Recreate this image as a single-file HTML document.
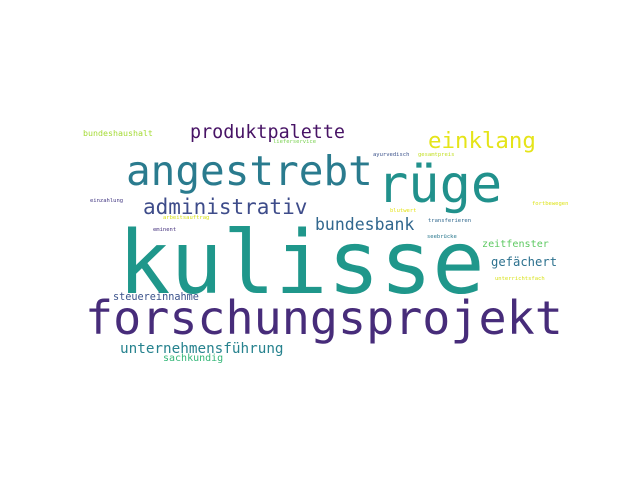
<!DOCTYPE html>
<html><head><meta charset="utf-8"><style>
html,body{margin:0;padding:0;background:#fff;width:640px;height:480px;overflow:hidden}
.w{position:absolute;font-family:"DejaVu Sans Mono","Liberation Mono",monospace;line-height:1;white-space:nowrap}
</style></head><body>
<div class="w" style="left:118px;top:220px;font-size:87px;color:#1f978b">kulisse</div>
<div class="w" style="left:85px;top:296px;font-size:46.7px;color:#472c7a">forschungsprojekt</div>
<div class="w" style="left:126px;top:151px;font-size:41px;color:#2a7b8e">angestrebt</div>
<div class="w" style="left:377px;top:159px;font-size:52px;color:#21918c">rüge</div>
<div class="w" style="left:143px;top:197px;font-size:21px;color:#3e4c8a">administrativ</div>
<div class="w" style="left:190px;top:124px;font-size:18.4px;color:#471365">produktpalette</div>
<div class="w" style="left:428px;top:130px;font-size:22.4px;color:#e5e419">einklang</div>
<div class="w" style="left:315px;top:217px;font-size:16.5px;color:#31678e">bundesbank</div>
<div class="w" style="left:482px;top:240px;font-size:10.1px;color:#5ec962">zeitfenster</div>
<div class="w" style="left:491px;top:256px;font-size:12.2px;color:#2c718e">gefächert</div>
<div class="w" style="left:120px;top:342px;font-size:14.3px;color:#26828e">unternehmensführung</div>
<div class="w" style="left:113px;top:293px;font-size:10.2px;color:#3b528b">steuereinnahme</div>
<div class="w" style="left:163px;top:354px;font-size:10px;color:#35b779">sachkundig</div>
<div class="w" style="left:83px;top:129px;font-size:8.3px;color:#a5db36">bundeshaushalt</div>
<div class="w" style="left:90px;top:199px;font-size:5.5px;color:#443983">einzahlung</div>
<div class="w" style="left:163px;top:216px;font-size:5.5px;color:#d8e219">arbeitsauftrag</div>
<div class="w" style="left:153px;top:228px;font-size:5.5px;color:#46327e">eminent</div>
<div class="w" style="left:273px;top:140px;font-size:5.5px;color:#7ad151">lieferservice</div>
<div class="w" style="left:373px;top:153px;font-size:5.5px;color:#3b528b">ayurvedisch</div>
<div class="w" style="left:418px;top:153px;font-size:5.5px;color:#c2df23">gesamtpreis</div>
<div class="w" style="left:532px;top:202px;font-size:5.5px;color:#dde318">fortbewegen</div>
<div class="w" style="left:390px;top:209px;font-size:5.5px;color:#e5e419">blutwert</div>
<div class="w" style="left:428px;top:219px;font-size:5.5px;color:#31688e">transferieren</div>
<div class="w" style="left:427px;top:235px;font-size:5.5px;color:#2a788e">seebrücke</div>
<div class="w" style="left:495px;top:277px;font-size:5.5px;color:#d8e219">unterrichtsfach</div>
</body></html>
